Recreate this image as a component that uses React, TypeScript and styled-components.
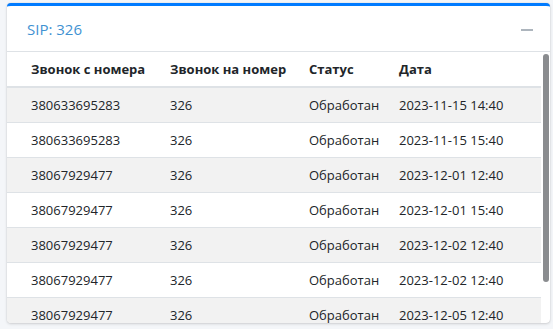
import React from "react";
import styled, { createGlobalStyle } from "styled-components";

type Call = {
  from: string;
  to: string;
  status: string;
  date: string;
};

const calls: Call[] = [
  { from: "380633695283", to: "326", status: "Обработан", date: "2023-11-15 14:40" },
  { from: "380633695283", to: "326", status: "Обработан", date: "2023-11-15 15:40" },
  { from: "38067929477", to: "326", status: "Обработан", date: "2023-12-01 12:40" },
  { from: "38067929477", to: "326", status: "Обработан", date: "2023-12-01 15:40" },
  { from: "38067929477", to: "326", status: "Обработан", date: "2023-12-02 12:40" },
  { from: "38067929477", to: "326", status: "Обработан", date: "2023-12-02 12:40" },
  { from: "38067929477", to: "326", status: "Обработан", date: "2023-12-05 12:40" },
  { from: "38067929477", to: "326", status: "Обработан", date: "2023-12-05 15:40" },
];

// visible part / full height of the list, for the scroll thumb
const VISIBLE = 270;
const CONTENT = 35 + calls.length * 35;

export default function App() {
  const thumb = Math.round(((VISIBLE - 4) * VISIBLE) / CONTENT);
  return (
    <>
      <GlobalStyle />
      <Page>
        <Card>
          <CardHeader>
            <CardTitle>SIP: 326</CardTitle>
            <CollapseBtn aria-label="collapse">
              <Minus />
            </CollapseBtn>
          </CardHeader>
          <CardBody>
            <Scroller>
              <Table>
                <colgroup>
                  <col style={{ width: 151 }} />
                  <col style={{ width: 139 }} />
                  <col style={{ width: 90 }} />
                  <col />
                </colgroup>
                <thead>
                  <tr>
                    <Th>Звонок с номера</Th>
                    <Th>Звонок на номер</Th>
                    <Th>Статус</Th>
                    <Th>Дата</Th>
                  </tr>
                </thead>
                <tbody>
                  {calls.map((c, i) => (
                    <Row key={i} $striped={i % 2 === 0}>
                      <Td>{c.from}</Td>
                      <Td>{c.to}</Td>
                      <Td>{c.status}</Td>
                      <Td>{c.date}</Td>
                    </Row>
                  ))}
                </tbody>
              </Table>
            </Scroller>
            <ScrollThumb style={{ height: thumb }} />
          </CardBody>
        </Card>
      </Page>
    </>
  );
}

const GlobalStyle = createGlobalStyle`
  html, body {
    margin: 0;
    padding: 0;
    background: #f4f6f9;
    font-family: "Open Sans", "Noto Sans", sans-serif;
    color: #212529;
  }
`;

const Page = styled.div`
  padding: 3px 3px 6px 7px;
  height: 329px;
  box-sizing: border-box;
`;

const Card = styled.div`
  width: 543px;
  height: 320px;
  background: #fff;
  border-top: 3px solid #007bff;
  border-radius: 4px;
  box-shadow: 0 0 1px rgba(0, 0, 0, 0.2), 0 1px 3px rgba(0, 0, 0, 0.15);
  display: flex;
  flex-direction: column;
  overflow: hidden;
  box-sizing: border-box;
`;

const CardHeader = styled.div`
  display: flex;
  align-items: center;
  justify-content: space-between;
  height: 46px;
  padding: 0 13px 0 20px;
  border-bottom: 1px solid #dee2e6;
  box-sizing: border-box;
  flex-shrink: 0;
`;

const CardTitle = styled.h3`
  margin: 0;
  font-size: 15px;
  font-weight: 400;
  color: #3f92d2;
  padding-top: 1px;
`;

const CollapseBtn = styled.button`
  border: none;
  background: transparent;
  padding: 4px 4px;
  display: flex;
  align-items: center;
  cursor: pointer;
`;

const Minus = styled.span`
  display: block;
  width: 12px;
  height: 2px;
  background: #adb5bd;
  margin-top: 3px;
`;

const CardBody = styled.div`
  position: relative;
  flex: 1;
  min-height: 0;
  display: flex;
`;

const Scroller = styled.div`
  flex: 1;
  overflow: hidden;
  margin-right: 9px;
`;

const ScrollThumb = styled.div`
  position: absolute;
  top: 2px;
  right: 1px;
  width: 6px;
  border-radius: 3px;
  background: #8a8c8f;
`;

const Table = styled.table`
  width: 100%;
  border-collapse: collapse;
  table-layout: fixed;
  font-size: 13px;
`;

const Th = styled.th`
  height: 35px;
  padding: 0 12px;
  text-align: left;
  font-weight: 700;
  border-bottom: 2px solid #dee2e6;
  white-space: nowrap;
  box-sizing: border-box;

  &:first-child {
    padding-left: 24px;
  }
`;

const Row = styled.tr<{ $striped: boolean }>`
  background: ${(p) => (p.$striped ? "#f2f2f2" : "#fff")};
`;

const Td = styled.td`
  height: 35px;
  padding: 0 12px;
  border-top: 1px solid #dee2e6;
  white-space: nowrap;
  box-sizing: border-box;

  &:first-child {
    padding-left: 24px;
  }
`;
